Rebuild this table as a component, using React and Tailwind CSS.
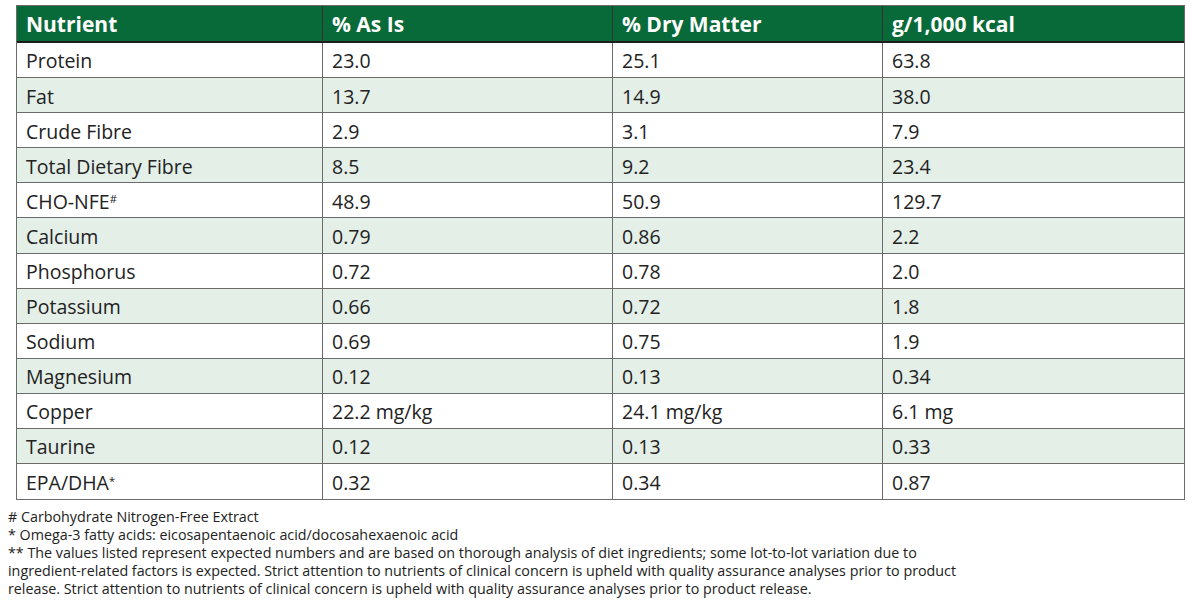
import React from "react";

const rows = [
  ["Protein", "23.0", "25.1", "63.8"],
  ["Fat", "13.7", "14.9", "38.0"],
  ["Crude Fibre", "2.9", "3.1", "7.9"],
  ["Total Dietary Fibre", "8.5", "9.2", "23.4"],
  ["CHO-NFE#", "48.9", "50.9", "129.7"],
  ["Calcium", "0.79", "0.86", "2.2"],
  ["Phosphorus", "0.72", "0.78", "2.0"],
  ["Potassium", "0.66", "0.72", "1.8"],
  ["Sodium", "0.69", "0.75", "1.9"],
  ["Magnesium", "0.12", "0.13", "0.34"],
  ["Copper", "22.2 mg/kg", "24.1 mg/kg", "6.1 mg"],
  ["Taurine", "0.12", "0.13", "0.33"],
  ["EPA/DHA*", "0.32", "0.34", "0.87"],
];

function Label({ text }) {
  if (text.endsWith("#") || text.endsWith("*")) {
    const base = text.slice(0, -1);
    const sym = text.slice(-1);
    return (
      <span>
        {base}
        <sup className="text-[11px]">{sym}</sup>
      </span>
    );
  }
  return <span>{text}</span>;
}

export default function App() {
  return (
    <div className="w-[1200px] h-[604px] bg-white text-[#222] overflow-hidden" style={{ fontFamily: "'Open Sans', sans-serif" }}>
      <div className="pt-[5px] pl-[16px]">
        <div className="w-[1169px] border border-[#6b6b6b]">
          <div className="grid grid-cols-[306px_290px_270px_1fr] bg-[#076a38] text-white font-bold text-[21px] h-[37px] border-b-2 border-[#1d1d1d]">
            <div className="px-[9px] pt-[3px] flex items-center border-r border-[#333]">Nutrient</div>
            <div className="px-[9px] pt-[3px] flex items-center border-r border-[#333]">% As Is</div>
            <div className="px-[9px] pt-[3px] flex items-center border-r border-[#333]">% Dry Matter</div>
            <div className="px-[9px] pt-[3px] flex items-center">g/1,000 kcal</div>
          </div>
          {rows.map((r, i) => (
            <div
              key={i}
              className={`grid grid-cols-[306px_290px_270px_1fr] text-[19.5px] h-[35.1px] ${i < rows.length - 1 ? "border-b border-[#6b6b6b]" : ""} ${i % 2 === 1 ? "bg-[#e4efe8]" : "bg-white"}`}
            >
              <div className="px-[9px] pt-[2px] flex items-center border-r border-[#6b6b6b]"><Label text={r[0]} /></div>
              <div className="px-[9px] pt-[2px] flex items-center border-r border-[#6b6b6b]">{r[1]}</div>
              <div className="px-[9px] pt-[2px] flex items-center border-r border-[#6b6b6b]">{r[2]}</div>
              <div className="px-[9px] pt-[2px] flex items-center">{r[3]}</div>
            </div>
          ))}
        </div>
      </div>
      <div className="pl-[8px] pt-[8px] text-[14.3px] leading-[18px] whitespace-nowrap">
        <p># Carbohydrate Nitrogen-Free Extract</p>
        <p>* Omega-3 fatty acids: eicosapentaenoic acid/docosahexaenoic acid</p>
        <p>
          ** The values listed represent expected numbers and are based on thorough analysis of diet ingredients; some lot-to-lot variation due to
          <br />
          ingredient-related factors is expected. Strict attention to nutrients of clinical concern is upheld with quality assurance analyses prior to product
          <br />
          release. Strict attention to nutrients of clinical concern is upheld with quality assurance analyses prior to product release.
        </p>
      </div>
    </div>
  );
}
